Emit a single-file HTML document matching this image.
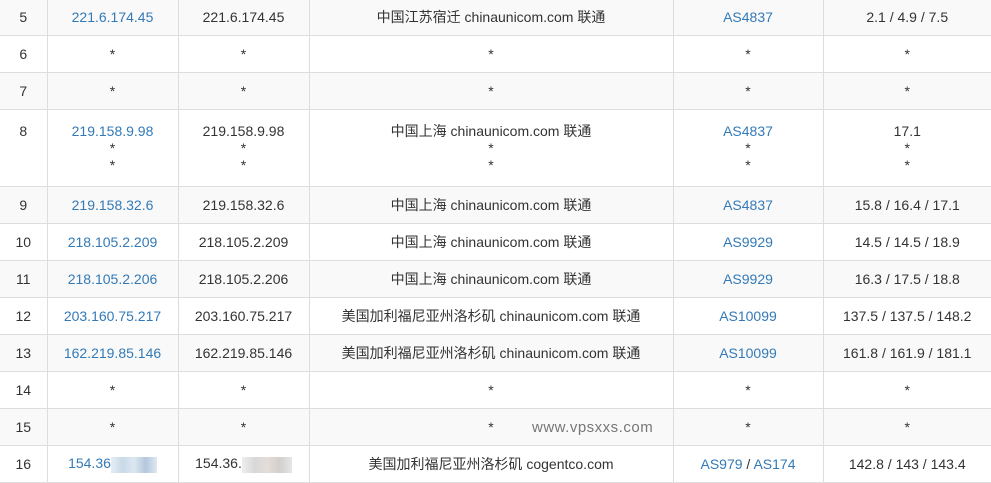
<!DOCTYPE html>
<html><head><meta charset="utf-8"><style>
body{margin:0;width:991px;height:480px;overflow:hidden;background:#fff;font-family:"Liberation Sans","Noto Sans CJK SC",sans-serif;font-size:14px;color:#333}
table{border-collapse:collapse;position:absolute;left:0;top:-2px;table-layout:fixed}
td{border:1px solid #ddd;text-align:center;height:36px;padding:0;line-height:17px;overflow:hidden}
tr.g td{background:#f9f9f9}
td:first-child{border-left:none}
td:last-child{border-right:none}
a{color:#337ab7;text-decoration:none}
.tall td{height:76px}
.l{height:17px;line-height:17px;white-space:nowrap;overflow:hidden}
.wm{position:absolute;left:532px;top:419px;color:#777;font-size:15px;letter-spacing:.5px}
.blur{display:inline-block;width:46px;height:16px;vertical-align:middle;background:linear-gradient(90deg,#e6eef5,#c9d9e8,#dde7f0,#b3c8dd,#dfe8f1)}
.blur2{display:inline-block;width:50px;height:16px;vertical-align:middle;background:linear-gradient(90deg,#eee,#d8d8d8,#e4ddd8,#d2cfcc,#e6e6e6)}
</style></head><body>
<table>
<colgroup><col style="width:47px"><col style="width:131px"><col style="width:131px"><col style="width:364px"><col style="width:150px"><col style="width:168px"></colgroup>
<tr class="g"><td>5</td><td><a>221.6.174.45</a></td><td>221.6.174.45</td><td>中国江苏宿迁 chinaunicom.com 联通</td><td><a>AS4837</a></td><td>2.1 / 4.9 / 7.5</td></tr>
<tr><td>6</td><td>*</td><td>*</td><td>*</td><td>*</td><td>*</td></tr>
<tr class="g"><td>7</td><td>*</td><td>*</td><td>*</td><td>*</td><td>*</td></tr>
<tr class="tall"><td><div class="l">8</div><div class="l"></div><div class="l"></div></td><td><div class="l"><a>219.158.9.98</a></div><div class="l">*</div><div class="l">*</div></td><td><div class="l">219.158.9.98</div><div class="l">*</div><div class="l">*</div></td><td><div class="l">中国上海 chinaunicom.com 联通</div><div class="l">*</div><div class="l">*</div></td><td><div class="l"><a>AS4837</a></div><div class="l">*</div><div class="l">*</div></td><td><div class="l">17.1</div><div class="l">*</div><div class="l">*</div></td></tr>
<tr class="g"><td>9</td><td><a>219.158.32.6</a></td><td>219.158.32.6</td><td>中国上海 chinaunicom.com 联通</td><td><a>AS4837</a></td><td>15.8 / 16.4 / 17.1</td></tr>
<tr><td>10</td><td><a>218.105.2.209</a></td><td>218.105.2.209</td><td>中国上海 chinaunicom.com 联通</td><td><a>AS9929</a></td><td>14.5 / 14.5 / 18.9</td></tr>
<tr class="g"><td>11</td><td><a>218.105.2.206</a></td><td>218.105.2.206</td><td>中国上海 chinaunicom.com 联通</td><td><a>AS9929</a></td><td>16.3 / 17.5 / 18.8</td></tr>
<tr><td>12</td><td><a>203.160.75.217</a></td><td>203.160.75.217</td><td>美国加利福尼亚州洛杉矶 chinaunicom.com 联通</td><td><a>AS10099</a></td><td>137.5 / 137.5 / 148.2</td></tr>
<tr class="g"><td>13</td><td><a>162.219.85.146</a></td><td>162.219.85.146</td><td>美国加利福尼亚州洛杉矶 chinaunicom.com 联通</td><td><a>AS10099</a></td><td>161.8 / 161.9 / 181.1</td></tr>
<tr><td>14</td><td>*</td><td>*</td><td>*</td><td>*</td><td>*</td></tr>
<tr class="g"><td>15</td><td>*</td><td>*</td><td>*</td><td>*</td><td>*</td></tr>
<tr><td>16</td><td><a>154.36</a><span class="blur"></span></td><td>154.36.<span class="blur2"></span></td><td>美国加利福尼亚州洛杉矶 cogentco.com</td><td><a>AS979</a> / <a>AS174</a></td><td>142.8 / 143 / 143.4</td></tr>
</table>
<div class="wm">www.vpsxxs.com</div>
</body></html>
